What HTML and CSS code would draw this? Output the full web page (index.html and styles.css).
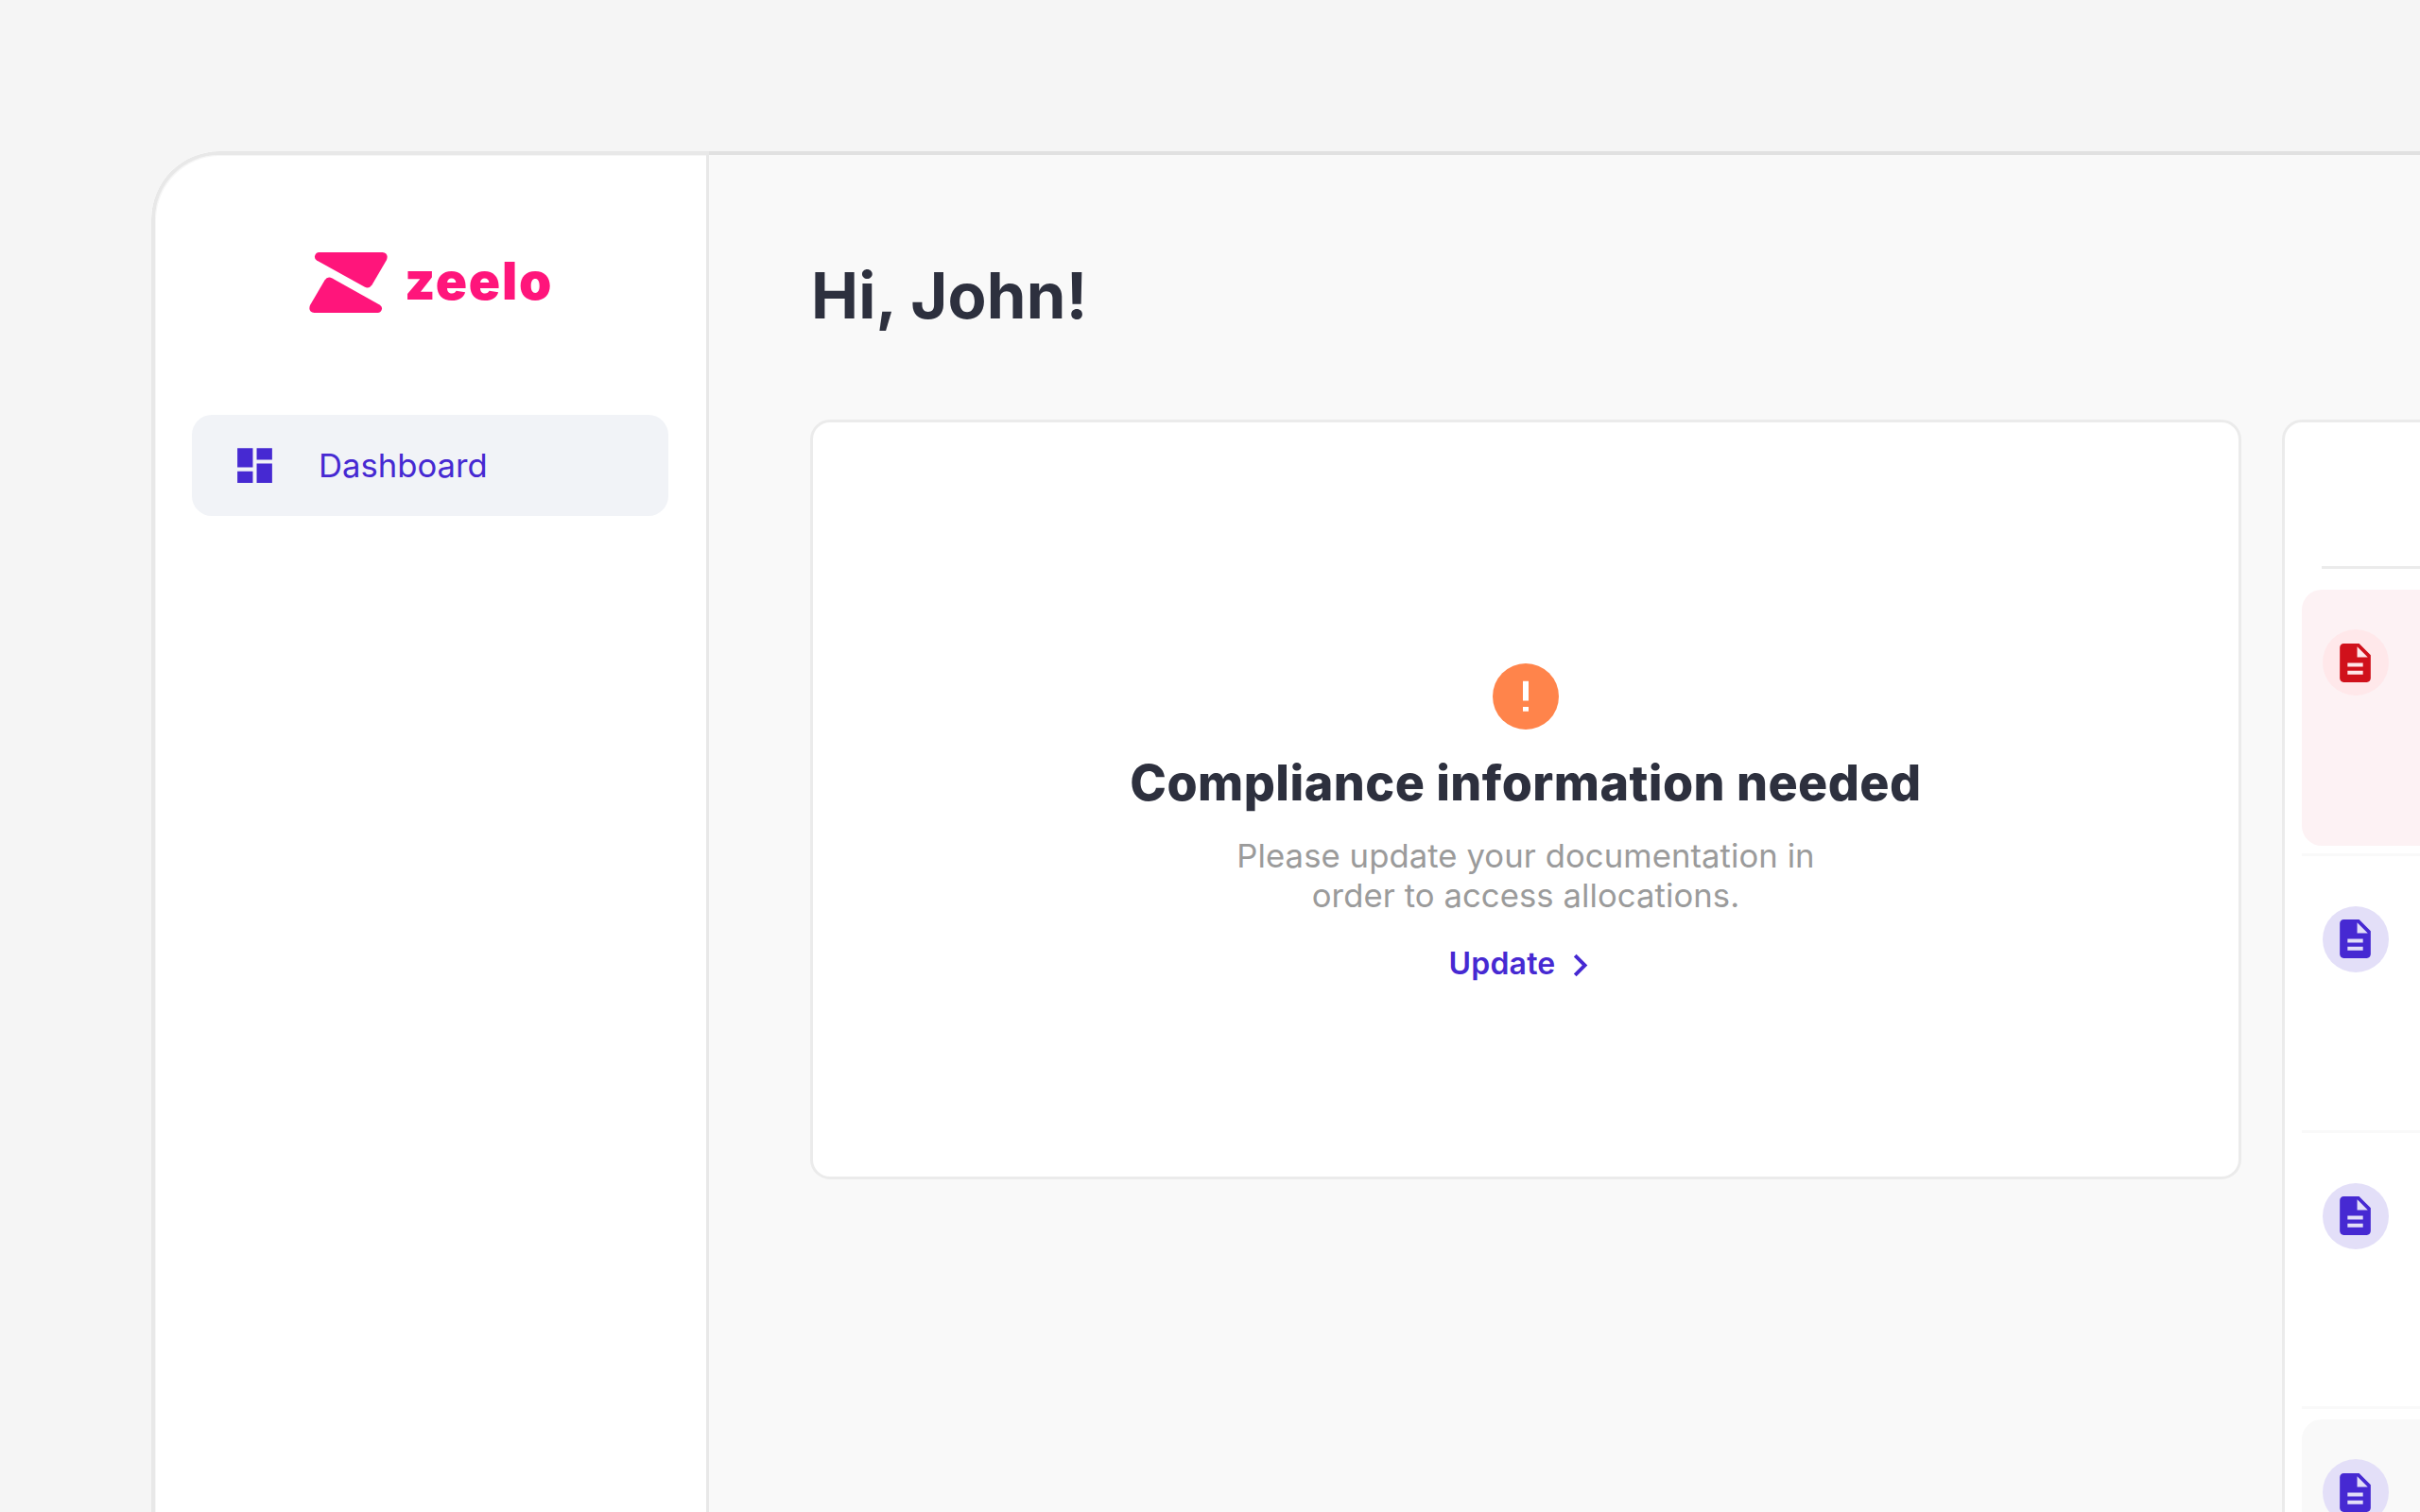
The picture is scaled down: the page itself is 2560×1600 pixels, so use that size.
FILE: index.html
```html
<!DOCTYPE html>
<html lang="en">
<head>
    <meta charset="utf-8">
    <title>Zeelo</title>
    <link rel="stylesheet" href="styles.css">
</head>
<body>
    <div class="window">
        <aside class="sidebar">
            <div class="logo">
                <svg class="logo-mark" viewBox="0 0 83 64">
                    <path d="M10.500 0H77.500Q84.500 1 82 8L66.500 34.500Q63.500 39 58.500 36.500L8 8.500Q5.500 7 6 4Q7 0 10.500 0Z"/>
                    <path d="M72.500 64H5.500Q-1.500 63 1 56L16.500 29.500Q19.500 25 24.500 27.500L74.500 55.500Q77.500 57.500 77 60Q76 64 72.500 64Z"/>
                </svg>
                <span class="logo-text">zeelo</span>
            </div>
            <nav>
                <a class="nav-item" href="#">
                    <svg class="icon" viewBox="0 0 24 24"><path d="M3 13h8V3H3v10zm0 8h8v-6H3v6zm10 0h8V11h-8v10zm0-18v6h8V3h-8z"/></svg>
                    <span>Dashboard</span>
                </a>
            </nav>
        </aside>
        <main class="main">
            <h1>Hi, John!</h1>
            <div class="cards">
                <section class="card notice">
                    <svg class="notice-icon" viewBox="0 0 70 70">
                        <circle cx="35" cy="35" r="35"/>
                        <path d="M32 18.700h6v20.700h-6zM32 46h6v4.800h-6z"/>
                    </svg>
                    <h2>Compliance information needed</h2>
                    <p>Please update your documentation in<br>order to access allocations.</p>
                    <a class="update" href="#">
                        <span>Update</span>
                        <svg class="chevron" viewBox="0 0 24 24"><path d="M10 6L8.590 7.410 13.170 12l-4.580 4.590L10 18l6-6z"/></svg>
                    </a>
                </section>
                <section class="card documents">
                    <div class="documents-header"></div>
                    <ul>
                        <li>
                            <div class="document error">
                                <span class="badge"><svg class="icon" viewBox="0 0 24 24"><path d="M14 2H6c-1.100 0-1.990.9-1.990 2L4 20c0 1.100.89 2 1.990 2H18c1.100 0 2-.9 2-2V8l-6-6zm2 16H8v-2h8v2zm0-4H8v-2h8v2zm-3-5V3.500L18.500 9H13z"/></svg></span>
                            </div>
                        </li>
                        <li>
                            <div class="document">
                                <span class="badge"><svg class="icon" viewBox="0 0 24 24"><path d="M14 2H6c-1.100 0-1.990.9-1.990 2L4 20c0 1.100.89 2 1.990 2H18c1.100 0 2-.9 2-2V8l-6-6zm2 16H8v-2h8v2zm0-4H8v-2h8v2zm-3-5V3.500L18.500 9H13z"/></svg></span>
                            </div>
                        </li>
                        <li>
                            <div class="document">
                                <span class="badge"><svg class="icon" viewBox="0 0 24 24"><path d="M14 2H6c-1.100 0-1.990.9-1.990 2L4 20c0 1.100.89 2 1.990 2H18c1.100 0 2-.9 2-2V8l-6-6zm2 16H8v-2h8v2zm0-4H8v-2h8v2zm-3-5V3.500L18.500 9H13z"/></svg></span>
                            </div>
                        </li>
                        <li>
                            <div class="document muted">
                                <span class="badge"><svg class="icon" viewBox="0 0 24 24"><path d="M14 2H6c-1.100 0-1.990.9-1.990 2L4 20c0 1.100.89 2 1.990 2H18c1.100 0 2-.9 2-2V8l-6-6zm2 16H8v-2h8v2zm0-4H8v-2h8v2zm-3-5V3.500L18.500 9H13z"/></svg></span>
                            </div>
                        </li>
                    </ul>
                </section>
            </div>
        </main>
    </div>
</body>
</html>
```
FILE: styles.css
```css
:root {
    --color-primary: #4629d2;
    --color-brand: #ff157b;
    --color-text: #2d303e;
    --color-muted: #9b9b9b;
    --color-border: #ebebeb;
    --color-surface: #f9f9f9;
}

* {
    box-sizing: border-box;
    margin: 0;
    padding: 0;
}
body {
    height: 100vh;
    padding: 160px 0 0 160px;
    overflow: hidden;
    background-color: #f5f5f5;
    color: var(--color-text);
    font-family: Inter, sans-serif;
}
a {
    color: var(--color-primary);
    text-decoration: none;
}
svg {
    display: block;
    flex: none;
    fill: currentColor;
}
.window {
    display: flex;
    height: 1440px;
    border-top-left-radius: 72px;
    overflow: hidden;
    background-color: #fff;
}
.sidebar {
    flex: none;
    width: 590px;
    padding: 103px 40px 0 39px;
    border: solid #e8e8e8;
    border-width: 4px 3px 0 4px;
    border-top-left-radius: 72px;
    box-shadow: inset 1px 1px #f6f6f6;
}
.logo {
    display: flex;
    align-items: center;
    height: 64px;
    margin-left: 124px;
    color: var(--color-brand);
}
.logo-mark {
    width: 83px;
    height: 64px;
}
.logo-text {
    margin: -5px 0 0 18px;
    font-size: 55px;
    font-weight: 900;
    line-height: 64px;
    letter-spacing: 1.700px;
}
.nav-item {
    display: flex;
    align-items: center;
    height: 107px;
    margin-top: 108px;
    padding-left: 42px;
    border-radius: 21px;
    background-color: #f1f3f7;
    font-size: 34.670px;
}
.icon {
    width: 49px;
    height: 49px;
}
.nav-item span {
    margin: -2px 0 0 43px;
}
.main {
    flex: 1;
    min-width: 0;
    padding: 109px 0 0 108px;
    border-top: 4px solid #e1e1e1;
    background-color: var(--color-surface);
}
h1 {
    height: 171px;
    font-size: 67px;
    font-weight: 700;
    line-height: 80px;
    letter-spacing: .2px;
}
.cards {
    display: flex;
    gap: 43px;
    width: 2400px;
    margin-left: -1px;
}
.card {
    border: 3px solid var(--color-border);
    border-radius: 21px;
    background-color: #fff;
}
.notice {
    display: flex;
    flex-direction: column;
    align-items: center;
    width: 1514px;
    height: 804px;
    padding-top: 255px;
}
.notice-icon {
    width: 70px;
    height: 70px;
}
.notice-icon circle {
    fill: #ff844b;
}
.notice-icon path {
    fill: #fff;
}
h2 {
    margin-top: 26px;
    font-size: 52px;
    font-weight: 800;
    line-height: 62px;
    letter-spacing: .450px;
    white-space: nowrap;
}
.notice p {
    margin-top: 24px;
    color: var(--color-muted);
    font-size: 34.670px;
    line-height: 42px;
    letter-spacing: .070px;
    text-align: center;
}
.update {
    display: flex;
    align-items: center;
    margin-top: 27px;
    font-size: 32px;
    font-weight: 600;
    line-height: 48px;
    letter-spacing: .2px;
}
.chevron {
    width: 47px;
    height: 47px;
    margin: 3px 0 0 3px;
}
.documents {
    flex: 1;
    height: 1300px;
    padding-left: 18px;
}
.documents-header {
    height: 155px;
    margin-left: 21px;
    border-bottom: 3px solid var(--color-border);
}
.documents ul {
    padding-top: 11.400px;
    list-style: none;
}
.documents li {
    padding: 10.400px 0 7.600px;
    border-bottom: 3px solid var(--color-surface);
}
.document {
    height: 271.700px;
    padding: 42.500px 0 0 21.500px;
    border-radius: 21px;
}
.badge {
    display: flex;
    align-items: center;
    justify-content: center;
    width: 70px;
    height: 70px;
    border-radius: 50%;
    background-color: #e3dff8;
    color: var(--color-primary);
}
.error {
    background-color: #fdf2f4;
}
.error .badge {
    background-color: #ffe8ea;
    color: #d0111b;
}
.muted {
    background-color: var(--color-surface);
}
```
